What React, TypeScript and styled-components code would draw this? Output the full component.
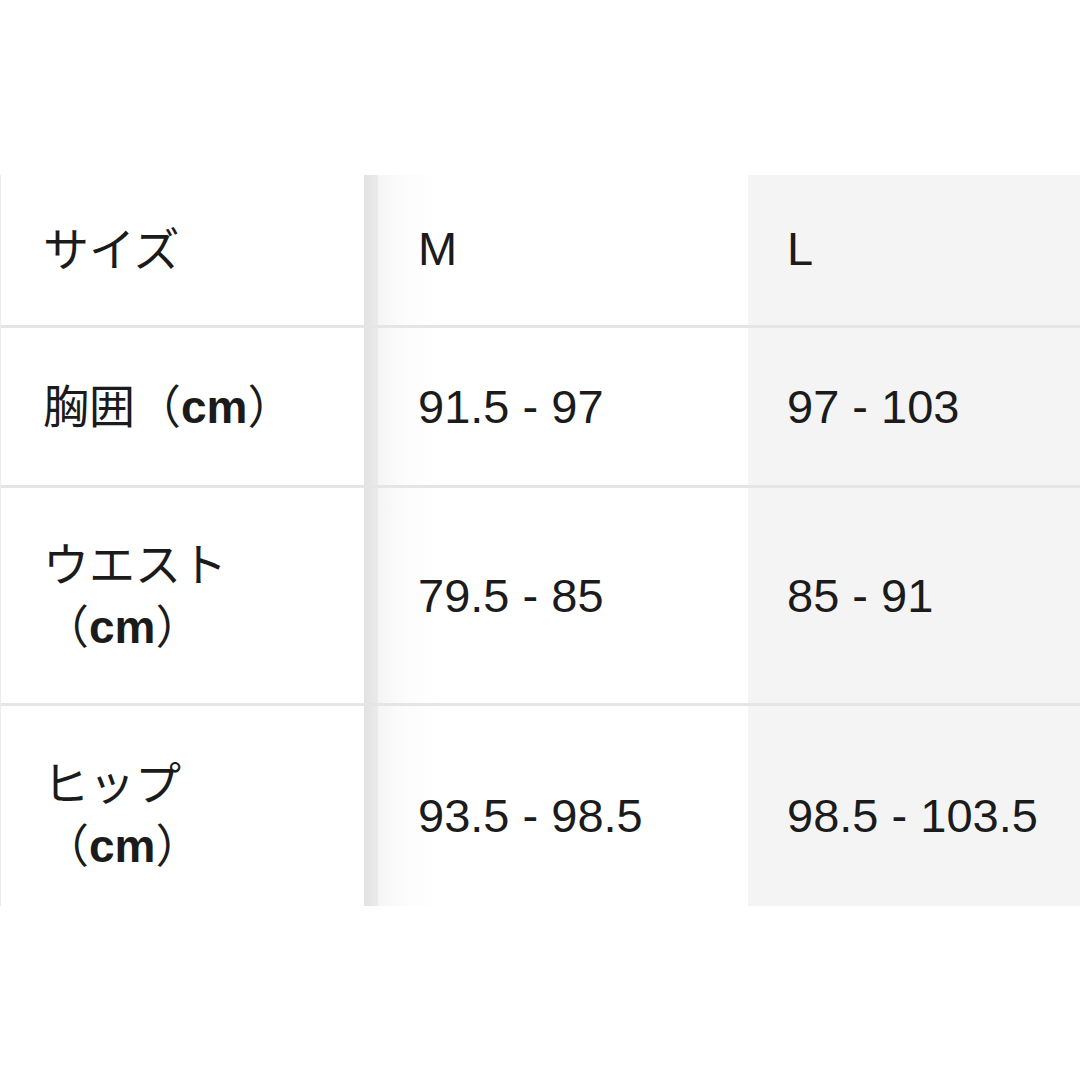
import React from "react";
import styled, { createGlobalStyle } from "styled-components";

const Global = createGlobalStyle`
  html, body { margin: 0; padding: 0; background: #ffffff; }
  body { font-family: "Liberation Sans", "Noto Sans CJK JP", sans-serif; color: #1b1b1b; }
`;

const Page = styled.div`
  width: 1080px;
  height: 1080px;
  padding-top: 175px;
  box-sizing: border-box;
  background: #ffffff;
`;

const Table = styled.div`
  display: flex;
  flex-direction: column;
  border-left: 1px solid #ececec;
`;

const Row = styled.div<{ $h: number; $last?: boolean }>`
  display: grid;
  grid-template-columns: 363px 384px 1fr;
  height: ${(p) => p.$h}px;
  border-bottom: ${(p) => (p.$last ? "none" : "3px solid #e5e5e5")};
`;

const Cell = styled.div<{ $shift?: number }>`
  display: flex;
  align-items: center;
  box-sizing: border-box;
  padding-top: ${(p) => (p.$shift && p.$shift > 0 ? p.$shift * 2 : 0)}px;
  padding-bottom: ${(p) => (p.$shift && p.$shift < 0 ? -p.$shift * 2 : 0)}px;
`;

const LabelCell = styled(Cell)`
  padding-left: 42px;
  padding-right: 40px;
  background: #ffffff;
`;

const MCell = styled(Cell)`
  padding-left: 54px;
  background: linear-gradient(
    to right,
    #e2e2e2 0px,
    #ebebeb 14px,
    #f5f5f5 14px,
    #fcfcfc 40px,
    #ffffff 80px
  );
`;

const LCell = styled(Cell)`
  padding-left: 39px;
  background: #f4f4f4;
`;

const Label = styled.div`
  font-family: "Noto Sans CJK JP", "Liberation Sans", sans-serif;
  font-size: 46px;
  font-weight: 400;
  line-height: 62px;
  color: #1b1b1b;
  margin-top: -4px;
`;

const Unit = styled.span`
  font-family: "Liberation Sans", sans-serif;
  font-weight: 700;
`;

const Value = styled.div`
  font-family: "Liberation Sans", Arial, sans-serif;
  font-size: 47px;
  line-height: 1;
  color: #1b1b1b;
  white-space: nowrap;
`;

type R = { label: React.ReactNode; m: string; l: string; h: number; shift?: number };

const rows: R[] = [
  { label: "サイズ", m: "M", l: "L", h: 150, shift: -2 },
  {
    label: (
      <>
        胸囲（<Unit>cm</Unit>）
      </>
    ),
    m: "91.5 - 97",
    l: "97 - 103",
    h: 157,
  },
  {
    label: (
      <>
        ウエスト
        <br />
        （<Unit>cm</Unit>）
      </>
    ),
    m: "79.5 - 85",
    l: "85 - 91",
    h: 215,
  },
  {
    label: (
      <>
        ヒップ
        <br />
        （<Unit>cm</Unit>）
      </>
    ),
    m: "93.5 - 98.5",
    l: "98.5 - 103.5",
    h: 200,
    shift: 9,
  },
];

export default function App() {
  return (
    <>
      <Global />
      <Page>
        <Table>
          {rows.map((r, i) => (
            <Row key={i} $h={r.h} $last={i === rows.length - 1}>
              <LabelCell $shift={r.shift}>
                <Label>{r.label}</Label>
              </LabelCell>
              <MCell $shift={r.shift}>
                <Value>{r.m}</Value>
              </MCell>
              <LCell $shift={r.shift}>
                <Value>{r.l}</Value>
              </LCell>
            </Row>
          ))}
        </Table>
      </Page>
    </>
  );
}
